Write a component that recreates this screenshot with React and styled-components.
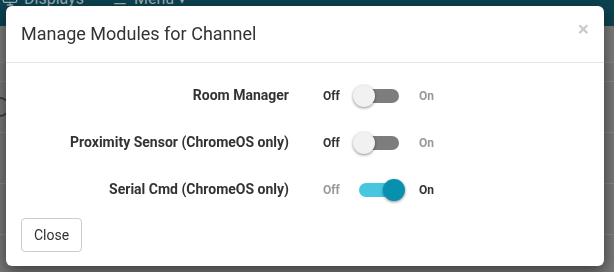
import { useState } from "react";
import styled, { createGlobalStyle } from "styled-components";
import { Monitor, Menu } from "lucide-react";

const GlobalStyle = createGlobalStyle`
    body {
        margin: 0;
        background: #777777;
        font-family: Roboto, "Liberation Sans", sans-serif;
        overflow: hidden;
    }
`;

/* page behind the modal, already dimmed by the backdrop */
const Page = styled.div`
    height: 272px;
    background: #777777;
`;

const NavBar = styled.div`
    height: 26px;
    background: #0c4250;
    display: flex;
    align-items: flex-start;
    gap: 28px;
    padding-left: 2px;
`;

const NavItem = styled.div`
    display: flex;
    align-items: center;
    gap: 6px;
    margin-top: -11px;
    color: #9db0b5;
    font-size: 16px;
    line-height: 20px;
`;

const SubBar = styled.div`
    height: 36px;
    background: #7b7b7b;
    border-bottom: 1px solid #858585;
`;

const PageRow = styled.div`
    height: ${(p) => p.$h}px;
    border-bottom: 1px solid #858585;
    display: flex;
    align-items: center;
`;

const Avatar = styled.div`
    width: 16px;
    height: 16px;
    margin-left: -10px;
    border: 2px solid #3d3d3d;
    border-radius: 50%;
`;

/* modal */
const ModalBox = styled.div`
    position: fixed;
    top: 6px;
    left: 6px;
    width: 598px;
    height: 260px;
    background: #fff;
    border-radius: 6px;
    box-shadow: 0 5px 15px rgba(0, 0, 0, 0.5);
    display: flex;
    flex-direction: column;
    color: #333;
`;

const Header = styled.div`
    padding: 15px;
    border-bottom: 1px solid #e5e5e5;
    display: flex;
    justify-content: space-between;
    align-items: flex-start;
`;

const Title = styled.h4`
    margin: 0;
    font-size: 18px;
    font-weight: 400;
    line-height: 26px;
    color: #333;
`;

const CloseX = styled.span`
    font-size: 21px;
    font-weight: 700;
    line-height: 21px;
    color: #000;
    opacity: 0.2;
    margin-top: -2px;
    cursor: pointer;
`;

const Body = styled.div`
    padding: 15px 15px 0;
    display: flex;
    flex-direction: column;
    gap: 11px;
`;

const Row = styled.div`
    height: 36px;
    display: flex;
    align-items: center;
`;

const Label = styled.div`
    width: 268px;
    text-align: right;
    font-size: 14px;
    font-weight: 700;
    color: #333;
    margin-top: -3px;
`;

const StateText = styled.span`
    font-size: 12px;
    font-weight: 700;
    color: ${(p) => (p.$active ? "#333" : "#999")};
    margin-left: ${(p) => p.$ml}px;
`;

const Track = styled.div`
    position: relative;
    width: 40px;
    height: 14px;
    margin-left: 19px;
    border-radius: 7px;
    background: ${(p) => (p.$on ? "#47c6e2" : "#7d7d7d")};
    cursor: pointer;
`;

const Knob = styled.div`
    position: absolute;
    top: -4px;
    left: ${(p) => (p.$on ? 24 : -6)}px;
    width: 22px;
    height: 22px;
    border-radius: 50%;
    background: ${(p) => (p.$on ? "#0791ae" : "#f1f1f1")};
    box-shadow: 0 1px 3px rgba(0, 0, 0, 0.45);
    transition: left 0.15s;
`;

const Footer = styled.div`
    padding: 10px 15px 15px;
    margin-top: auto;
`;

const Button = styled.button`
    font-family: inherit;
    font-size: 14px;
    line-height: 20px;
    padding: 6px 12px;
    color: #333;
    background: #fff;
    border: 1px solid #ccc;
    border-radius: 4px;
`;

const modules = [
    { name: "Room Manager", on: false },
    { name: "Proximity Sensor (ChromeOS only)", on: false },
    { name: "Serial Cmd (ChromeOS only)", on: true },
];

function ModuleRow({ name, initial }) {
    const [on, setOn] = useState(initial);
    return (
        <Row>
            <Label>{name}</Label>
            <StateText $active={!on} $ml={34}>Off</StateText>
            <Track $on={on} onClick={() => setOn(!on)}>
                <Knob $on={on} />
            </Track>
            <StateText $active={on} $ml={20}>On</StateText>
        </Row>
    );
}

export default function App() {
    return (
        <>
            <GlobalStyle />
            <Page>
                <NavBar>
                    <NavItem>
                        <Monitor size={16} />
                        Displays
                    </NavItem>
                    <NavItem>
                        <Menu size={16} />
                        Menu ▾
                    </NavItem>
                </NavBar>
                <SubBar />
                <PageRow $h={18} />
                <PageRow $h={50}>
                    <Avatar />
                </PageRow>
                <PageRow $h={50} />
                <PageRow $h={50} />
            </Page>
            <ModalBox>
                <Header>
                    <Title>Manage Modules for Channel</Title>
                    <CloseX>×</CloseX>
                </Header>
                <Body>
                    {modules.map((m) => (
                        <ModuleRow key={m.name} name={m.name} initial={m.on} />
                    ))}
                </Body>
                <Footer>
                    <Button>Close</Button>
                </Footer>
            </ModalBox>
        </>
    );
}
